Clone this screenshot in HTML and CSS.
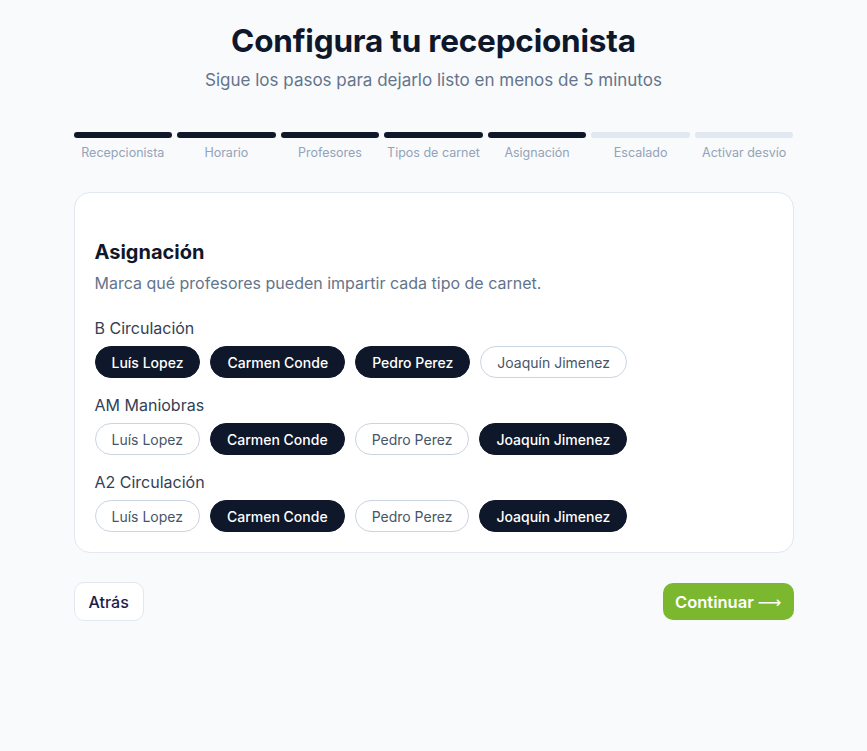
FILE: index.html
```
<!DOCTYPE html>
<html lang="es">
<head>
<meta charset="utf-8">
<title>Configura tu recepcionista</title>
<link rel="stylesheet" href="styles.css">
</head>
<body>
<main class="wrap">
  <header class="head">
    <h1 class="title">Configura tu recepcionista</h1>
    <p class="subtitle">Sigue los pasos para dejarlo listo en menos de 5 minutos</p>
  </header>

  <ol class="steps">
    <li class="step done"><span class="bar"></span><span class="label">Recepcionista</span></li>
    <li class="step done"><span class="bar"></span><span class="label">Horario</span></li>
    <li class="step done"><span class="bar"></span><span class="label">Profesores</span></li>
    <li class="step done"><span class="bar"></span><span class="label">Tipos de carnet</span></li>
    <li class="step done"><span class="bar"></span><span class="label">Asignación</span></li>
    <li class="step"><span class="bar"></span><span class="label">Escalado</span></li>
    <li class="step"><span class="bar"></span><span class="label">Activar desvío</span></li>
  </ol>

  <section class="card">
    <h2 class="card-title">Asignación</h2>
    <p class="card-desc">Marca qué profesores pueden impartir cada tipo de carnet.</p>

    <div class="group">
      <div class="group-name">B Circulación</div>
      <div class="chips">
        <button class="chip on">Luís Lopez</button>
        <button class="chip on">Carmen Conde</button>
        <button class="chip on">Pedro Perez</button>
        <button class="chip">Joaquín Jimenez</button>
      </div>
    </div>

    <div class="group">
      <div class="group-name">AM Maniobras</div>
      <div class="chips">
        <button class="chip">Luís Lopez</button>
        <button class="chip on">Carmen Conde</button>
        <button class="chip">Pedro Perez</button>
        <button class="chip on">Joaquín Jimenez</button>
      </div>
    </div>

    <div class="group">
      <div class="group-name">A2 Circulación</div>
      <div class="chips">
        <button class="chip">Luís Lopez</button>
        <button class="chip on">Carmen Conde</button>
        <button class="chip">Pedro Perez</button>
        <button class="chip on">Joaquín Jimenez</button>
      </div>
    </div>
  </section>

  <footer class="actions">
    <button class="btn back">Atrás</button>
    <button class="btn next">Continuar <span class="arrow">⟶</span></button>
  </footer>
</main>
</body>
</html>
```
FILE: styles.css
```
* { box-sizing: border-box; }
html, body { margin: 0; padding: 0; }
body {
  background: #f8fafc;
  font-family: Inter, "Noto Sans", "Liberation Sans", sans-serif;
  color: #0f172a;
}
.wrap {
  width: 720px;
  margin: 0 auto;
  padding-top: 22px;
}
.head { text-align: center; }
.title {
  margin: 0;
  font-size: 31.5px;
  line-height: 38px;
  font-weight: 700;
  letter-spacing: -0.2px;
  color: #0f172a;
}
.subtitle {
  margin: 8px 0 0;
  font-size: 17px;
  line-height: 24px;
  color: #64748b;
}
.steps {
  list-style: none;
  margin: 40px 0 0;
  padding: 0;
  display: grid;
  grid-template-columns: repeat(7, 1fr);
  gap: 5px;
}
.step {
  display: flex;
  flex-direction: column;
  align-items: center;
  gap: 7px;
}
.bar {
  width: 100%;
  height: 6px;
  border-radius: 3px;
  background: #e2e8f0;
}
.step.done .bar { background: #0f172a; }
.label {
  font-size: 12.5px;
  line-height: 16px;
  color: #94a3b8;
  white-space: nowrap;
}
.card {
  margin-top: 31px;
  background: #fff;
  border: 1px solid #e2e8f0;
  border-radius: 16px;
  padding: 46px 20px 20px;
}
.card-title {
  margin: 0;
  font-size: 20px;
  line-height: 26px;
  font-weight: 700;
  color: #0f172a;
}
.card-desc {
  margin: 6px 0 0;
  font-size: 16px;
  line-height: 24px;
  color: #64748b;
}
.group { margin-top: 22px; }
.group + .group { margin-top: 16px; }
.group-name {
  font-size: 16px;
  line-height: 22px;
  color: #334155;
}
.chips {
  display: flex;
  gap: 10px;
  margin-top: 7px;
}
.chip {
  font-family: inherit;
  height: 32px;
  padding: 0 16px;
  border-radius: 999px;
  font-size: 14px;
  border: 1px solid #cbd5e1;
  background: #fff;
  color: #475569;
}
.chip.on {
  background: #0f172a;
  border-color: #0f172a;
  color: #fff;
  font-weight: 500;
}
.actions {
  margin-top: 29px;
  display: flex;
  justify-content: space-between;
  align-items: center;
}
.btn {
  font-family: inherit;
  font-size: 16px;
  border-radius: 10px;
  height: 39px;
  padding: 0 14px;
}
.back {
  background: #fff;
  border: 1px solid #e2e8f0;
  color: #1e1b4b;
  font-weight: 500;
}
.next {
  height: 37px;
  background: #7cb82f;
  border: none;
  color: #fff;
  font-size: 16.5px;
  font-weight: 600;
  padding: 0 12px;
}
.arrow {
  font-family: "DejaVu Sans", sans-serif;
  font-weight: 400;
}
```
